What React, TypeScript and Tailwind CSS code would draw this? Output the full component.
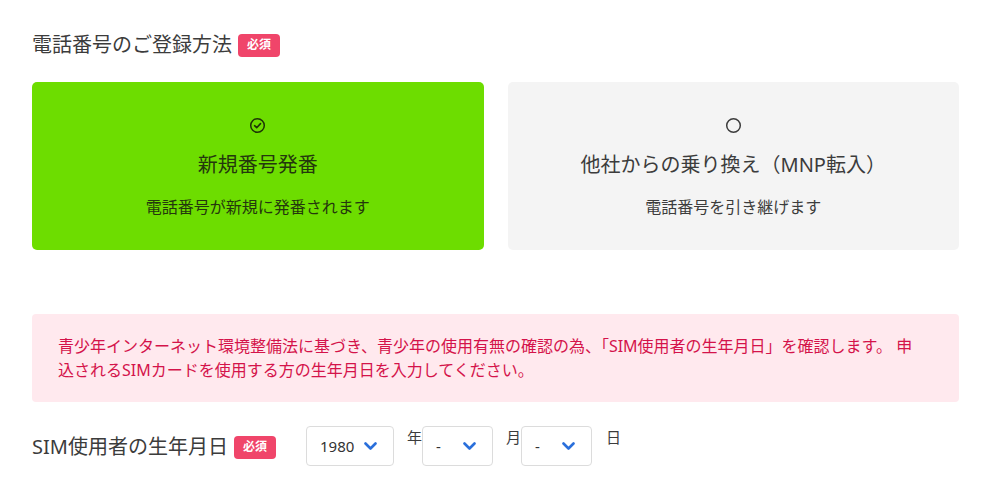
import React from "react";

const font = {
  fontFamily: '"Noto Sans", "Noto Sans CJK JP", sans-serif',
};

const Badge = () => (
  <span className="inline-flex h-[23px] w-[42px] items-center justify-center rounded-[4px] bg-[#f0456a] text-[12px] font-bold text-white">
    必須
  </span>
);

const Chevron = () => (
  <svg width="13" height="9" viewBox="0 0 13 9" fill="none">
    <path
      d="M1.5 1.5 L6.5 6.5 L11.5 1.5"
      stroke="#2a6fdb"
      strokeWidth="2.6"
      strokeLinecap="round"
      strokeLinejoin="round"
    />
  </svg>
);

type SelectBoxProps = { value: string; width: string };

const SelectBox: React.FC<SelectBoxProps> = ({ value, width }) => (
  <div
    className={`flex h-[40px] ${width} items-center justify-between rounded-[4px] border border-[#dcdcdc] bg-white pl-[13px] pr-[16px] text-[15px] text-[#333]`}
  >
    <span>{value}</span>
    <Chevron />
  </div>
);

type OptionCardProps = {
  selected: boolean;
  title: string;
  desc: string;
};

const OptionCard: React.FC<OptionCardProps> = ({ selected, title, desc }) => (
  <div
    className={`flex h-[168px] flex-col items-center rounded-[5px] pt-[35px] ${
      selected ? "bg-[#6ddd00] text-[#24370d]" : "bg-[#f4f4f4] text-[#3c3c3c]"
    }`}
  >
    {selected ? (
      <svg width="17" height="17" viewBox="0 0 17 17" fill="none">
        <circle cx="8.5" cy="8.5" r="6.8" stroke="#1d3306" strokeWidth="1.5" />
        <path
          d="M5.6 8.7 L7.7 10.7 L11.5 6.6"
          stroke="#1d3306"
          strokeWidth="1.6"
          strokeLinecap="round"
          strokeLinejoin="round"
        />
      </svg>
    ) : (
      <svg width="17" height="17" viewBox="0 0 17 17" fill="none">
        <circle cx="8.5" cy="8.5" r="6.8" stroke="#3c3c3c" strokeWidth="1.5" />
      </svg>
    )}
    <div className="mt-[17px] text-[20px] leading-[28px]">{title}</div>
    <div className="mt-[16px] text-[16px] leading-[24px]">{desc}</div>
  </div>
);

export default function App() {
  return (
    <div className="min-h-screen bg-white px-[32px] pt-[32px]" style={font}>
      <div className="flex items-center gap-[6px]">
        <h2 className="text-[20px] leading-[26px] text-[#3c3c3c]">
          電話番号のご登録方法
        </h2>
        <Badge />
      </div>

      <div className="mt-[24px] grid grid-cols-2 gap-[24px]">
        <OptionCard
          selected
          title="新規番号発番"
          desc="電話番号が新規に発番されます"
        />
        <OptionCard
          selected={false}
          title="他社からの乗り換え（MNP転入）"
          desc="電話番号を引き継げます"
        />
      </div>

      <div className="mt-[64px] rounded-[4px] bg-[#ffe9ee] px-[26px] py-[20px]">
        <p className="text-[16px] leading-[24px] text-[#d4134a]">
          青少年インターネット環境整備法に基づき、青少年の使用有無の確認の為、「SIM使用者の生年月日」を確認します。 申
          <br />
          込されるSIMカードを使用する方の生年月日を入力してください。
        </p>
      </div>

      <div className="mt-[24px] flex items-start">
        <div className="flex w-[274px] items-center gap-[6px] pt-[8px]">
          <span className="text-[20px] leading-[26px] text-[#3c3c3c]">
            SIM使用者の生年月日
          </span>
          <Badge />
        </div>
        <SelectBox value="1980" width="w-[88px]" />
        <span className="ml-[13px] mt-[1px] text-[15px] leading-[20px] text-[#3c3c3c]">
          年
        </span>
        <SelectBox value="-" width="w-[71px]" />
        <span className="ml-[13px] mt-[1px] text-[15px] leading-[20px] text-[#3c3c3c]">
          月
        </span>
        <SelectBox value="-" width="w-[71px]" />
        <span className="ml-[14px] mt-[1px] text-[15px] leading-[20px] text-[#3c3c3c]">
          日
        </span>
      </div>
    </div>
  );
}
